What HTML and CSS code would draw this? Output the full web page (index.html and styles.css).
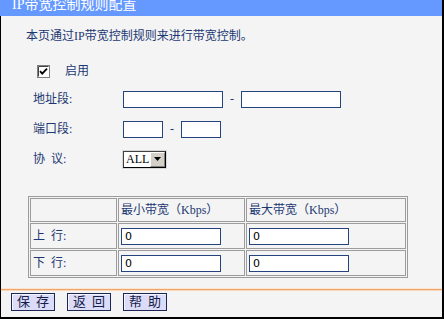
FILE: index.html
```html
<!DOCTYPE html>
<html>
<head>
<meta charset="utf-8">
<link rel="stylesheet" href="styles.css">
</head>
<body>
<div class="frame">
  <div class="title"><span class="title-text">IP带宽控制规则配置</span></div>
  <div class="main">
    <p class="desc">本页通过IP带宽控制规则来进行带宽控制。</p>
    <div class="form">
      <div class="check-row">
        <span class="cb"><svg width="13" height="13" viewBox="0 0 13 13"><rect x="0.5" y="0.5" width="12" height="12" fill="#fff" stroke="#808080"/><path d="M1.5 1.5H11.5M1.5 1.5V11.5" stroke="#404040"/><path d="M3 6.2L5.2 8.6L10 3.6" fill="none" stroke="#000" stroke-width="1.8"/></svg></span>
        <span class="check-label">启用</span>
      </div>
      <span class="label">地址段:</span>
      <div class="ctrl"><span class="inp w100"></span><span class="dash">-</span><span class="inp w100"></span></div>
      <span class="label">端口段:</span>
      <div class="ctrl"><span class="inp w40"></span><span class="dash">-</span><span class="inp w40"></span></div>
      <span class="label">协<span class="sp"></span>议:</span>
      <div class="ctrl"><span class="select"><span class="sel-val">ALL</span><span class="sel-btn"><svg width="7" height="4" viewBox="0 0 7 4"><path d="M0 0H7L3.5 4Z" fill="#000"/></svg></span></span></div>
    </div>
    <table class="bw">
      <tr class="r-head"><td class="c1"></td><td class="c2">最小带宽（Kbps）</td><td class="c3">最大带宽（Kbps）</td></tr>
      <tr class="r-body"><td class="c1">上<span class="sp"></span>行:</td><td class="c2"><span class="inp w100 val">0</span></td><td class="c3"><span class="inp w100 val">0</span></td></tr>
      <tr class="r-body"><td class="c1">下<span class="sp"></span>行:</td><td class="c2"><span class="inp w100 val">0</span></td><td class="c3"><span class="inp w100 val">0</span></td></tr>
    </table>
    <div class="sep"></div>
    <div class="buttons">
      <span class="btn">保<span class="bsp"></span>存</span>
      <span class="btn">返<span class="bsp"></span>回</span>
      <span class="btn">帮<span class="bsp"></span>助</span>
    </div>
  </div>
</div>
</body>
</html>
```
FILE: styles.css
```css
html, body {
  margin: 0;
  padding: 0;
  background: #f4f4f4;
}
.frame {
  width: 444px;
  height: 319px;
  box-sizing: border-box;
  border-right: 2px solid #000;
  border-bottom: 2px solid #000;
  background: #f4f4f4;
  display: flex;
  flex-direction: column;
  overflow: hidden;
  font-family: "Liberation Serif", "Noto Sans CJK SC", serif;
  font-size: 12px;
  color: #1c3873;
}
.title {
  height: 16px;
  flex: none;
  background: #6699ff;
  overflow: hidden;
}
.title-text {
  display: block;
  margin-top: -5px;
  padding-left: 12px;
  color: #fff;
  font-size: 14px;
  line-height: 20px;
}
.main {
  flex: 1;
  border-left: 1px solid #000;
  display: flex;
  flex-direction: column;
}
.desc {
  margin: 10px 0 0 25px;
  line-height: 20px;
}
.form {
  margin-top: 12px;
  padding-left: 32px;
  display: grid;
  grid-template-columns: 90px auto;
  grid-template-rows: 26px repeat(3, 30px);
  align-items: center;
}
.check-row {
  grid-column: 1 / 3;
  display: flex;
  align-items: center;
  padding-left: 4px;
}
.cb {
  display: flex;
  width: 13px;
  height: 13px;
}
.check-label {
  margin-left: 15px;
  line-height: 14px;
}
.label {
  line-height: 14px;
}
.sp {
  display: inline-block;
  width: 6px;
}
.ctrl {
  display: flex;
  align-items: center;
}
.inp {
  display: block;
  box-sizing: border-box;
  height: 17px;
  background: #fff;
  border: 1px solid #24437f;
}
.w100 { width: 100px; }
.w40 { width: 40px; }
.dash {
  width: 18px;
  text-align: center;
  line-height: 14px;
}
.select {
  display: flex;
  box-sizing: border-box;
  width: 43px;
  height: 17px;
  border: 1px solid #000;
  border-top-color: #404040;
  border-left-color: #404040;
  background: #fff;
  box-shadow: 0 0 0 1px #d8d8d8;
}
.sel-val {
  flex: 1;
  font-family: "Liberation Serif", serif;
  font-size: 12px;
  line-height: 15px;
  color: #000;
  padding-left: 2px;
}
.sel-btn {
  width: 15px;
  box-sizing: border-box;
  background: #d4d0c8;
  border: 1px solid;
  border-color: #fff #808080 #808080 #fff;
  display: flex;
  align-items: center;
  justify-content: center;
}
.bw {
  margin: 22px 0 0 27px;
  width: 380px;
  border-collapse: separate;
  border-spacing: 1px;
  border: 1px solid #9c9c9c;
  table-layout: fixed;
}
.bw td {
  border: 1px solid #9c9c9c;
  padding: 0 2px;
  box-sizing: border-box;
  line-height: 14px;
}
.bw .c1 { width: 87px; }
.bw .c2 { width: 127px; }
.bw .c3 { width: 160px; }
.r-head td { height: 24px; }
.r-body td { height: 26px; }
.val {
  font-family: "DejaVu Sans", "Liberation Sans", sans-serif;
  font-size: 11px;
  line-height: 15px;
  color: #000;
  padding-left: 3px;
}
.sep {
  margin-top: 11px;
  height: 1px;
  background: #f0a66a;
  box-shadow: 0 1px 0 #f8d6b8, 0 -1px 0 #fbe4d0;
}
.buttons {
  display: flex;
  gap: 12px;
  margin-top: 3px;
  padding-left: 10px;
}
.btn {
  display: flex;
  align-items: center;
  justify-content: center;
  box-sizing: border-box;
  width: 44px;
  height: 18px;
  background: #dcdcf8;
  border: 1px solid #1b2750;
  box-shadow: inset 1px 1px 0 #f4f4ff;
  font-size: 13px;
  line-height: 16px;
  color: #14204a;
}
.bsp {
  display: inline-block;
  width: 6px;
}
```
